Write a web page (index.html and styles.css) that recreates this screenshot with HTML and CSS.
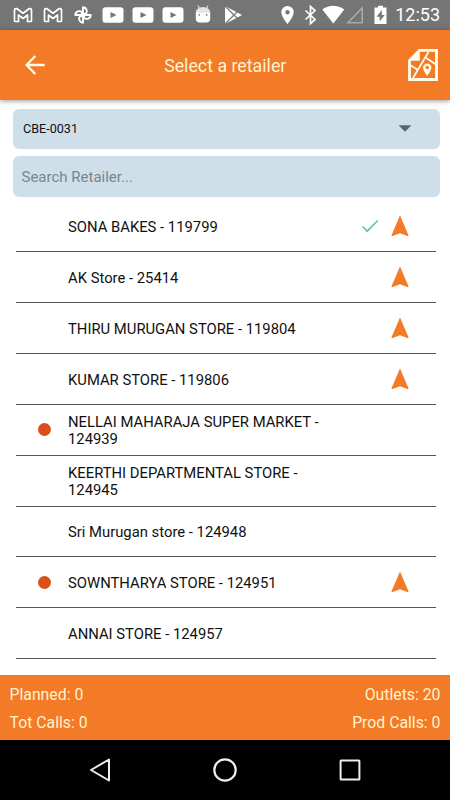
FILE: index.html
```html
<!DOCTYPE html>
<html lang="en">
<head>
  <meta charset="utf-8">
  <title>Select a retailer</title>
  <link rel="stylesheet" href="styles.css">
</head>
<body>
  <!-- shared icons -->
  <svg class="sprite">
    <symbol id="gmail" viewBox="0 0 30 30">
      <path d="M6.500 10v10.500q0 1 1 1h3V15l4.500 3.500L19.500 15v6.500h3q1 0 1-1V10q0-1.300-1.500-1.300h-1L15 13.200 9 8.700H8Q6.500 8.700 6.500 10z" fill="none" stroke="#fff" stroke-width="1.700" stroke-linejoin="round"/>
    </symbol>
    <symbol id="youtube" viewBox="0 0 30 30">
      <path d="M7.500 7.200h15q3 0 3 3v9.600q0 3-3 3h-15q-3 0-3-3v-9.600q0-3 3-3zM12.500 12v6l6-3z" fill="#fff" fill-rule="evenodd"/>
    </symbol>
    <symbol id="navigate" viewBox="0 0 18 22">
      <path d="M9 0.500L17.600 20.500 17 21.300 9 18.200 1 21.300 0.400 20.500z" fill="#f37a26"/>
    </symbol>
  </svg>

  <div class="status-bar">
    <svg class="notice"><use href="#gmail"/></svg>
    <svg class="notice"><use href="#gmail"/></svg>
    <svg class="notice" viewBox="0 0 30 30">
      <g fill="none" stroke="#fff" stroke-width="1.900" stroke-linejoin="round">
        <path d="M15 15V7.300a4 4 0 0 1 2.800 6.700H15"/>
        <path d="M15 15V7.300a4 4 0 0 1 2.800 6.700H15" transform="rotate(90 15 15)"/>
        <path d="M15 15V7.300a4 4 0 0 1 2.800 6.700H15" transform="rotate(180 15 15)"/>
        <path d="M15 15V7.300a4 4 0 0 1 2.800 6.700H15" transform="rotate(270 15 15)"/>
      </g>
    </svg>
    <svg class="notice"><use href="#youtube"/></svg>
    <svg class="notice"><use href="#youtube"/></svg>
    <svg class="notice"><use href="#youtube"/></svg>
    <svg class="notice" viewBox="0 0 30 30">
      <path d="M10 5.500l2 3.500M20 5.500L18 9" stroke="#fff" stroke-width="1"/>
      <path d="M7.800 12.500a7.200 5.500 0 0 1 14.400 0z" fill="#e4e4e4"/>
      <path d="M7.800 12.300h14.400v6.200q0 4-4 4h-6.400q-4 0-4-4z" fill="#fff"/>
      <circle cx="11.300" cy="14.800" r=".9" fill="#777"/>
      <circle cx="18.700" cy="14.800" r=".9" fill="#777"/>
    </svg>
    <svg class="notice" viewBox="0 0 30 30">
      <path d="M7 6l17 9L7 24z" fill="#fff"/>
      <path d="M7 6l12.500 12.500M7 24l12.500-12.500" stroke="#757575" stroke-width="1.200"/>
    </svg>

    <div class="system">
      <svg class="sys" viewBox="0 0 23 30">
        <path d="M11.500 6a6.200 6.200 0 0 0-6.200 6.200C5.300 16.800 11.500 24 11.500 24s6.200-7.200 6.200-11.800A6.200 6.200 0 0 0 11.500 6zm0 4a2.200 2.200 0 1 1 0 4.400 2.200 2.200 0 0 1 0-4.400z" fill="#fff"/>
      </svg>
      <svg class="sys" viewBox="0 0 23 30">
        <path d="M6.500 10.500l9.500 9-4.500 4V6.500l4.500 4-9.500 9" fill="none" stroke="#fff" stroke-width="1.700"/>
      </svg>
      <svg class="sys" viewBox="0 0 23 30">
        <path d="M.3 9.500Q11 2 22.300 9.500L11.300 23.500z" fill="#fff"/>
      </svg>
      <svg class="sys" viewBox="0 0 23 30">
        <path d="M17.200 8v14.800H3z" fill="none" stroke="#a9a9a9" stroke-width="1.600"/>
      </svg>
      <svg class="sys battery" viewBox="0 0 25 30">
        <path d="M6.500 7.500h3.500V5.800h5v1.700h3.500V24h-12zM13.800 10l-5.300 6.700h3.200V21.500l5-6.500h-2.900z" fill="#fff" fill-rule="evenodd"/>
      </svg>
      <span class="clock">12:53</span>
    </div>
  </div>

  <header class="toolbar">
    <svg class="back" viewBox="0 0 20 20">
      <path d="M19.700 10H1.800M10.300 1L1.500 10l8.800 9" fill="none" stroke="#fffbe6" stroke-width="2.300"/>
    </svg>
    <h1 class="title">Select a retailer</h1>
    <svg class="map" viewBox="0 0 30 32">
      <path d="M11.500 1.400H28.500V30.500H1.500V11.500z" fill="none" stroke="#fffdea" stroke-width="2.800"/>
      <path d="M11.800 1.500V11.800H1.500z" fill="#fffdea"/>
      <path d="M20.500 3L5 29M17.500 8.500l10.500 7M2 16l8 5" fill="none" stroke="#fffdea" stroke-width="1.700"/>
      <path d="M19.200 14.200a4.400 4.400 0 0 0-4.400 4.400c0 3.300 4.400 8.700 4.400 8.700s4.400-5.400 4.400-8.700a4.400 4.400 0 0 0-4.400-4.400z" fill="#fffdea" stroke="#f37a26" stroke-width=".6"/>
      <circle cx="19.200" cy="18.500" r="1.700" fill="#f37a26"/>
    </svg>
  </header>

  <main class="content">
    <div class="field select">
      <span>CBE-0031</span>
      <svg class="caret" viewBox="0 0 14 7"><path d="M.5.300h13L7 6.700z" fill="#536970"/></svg>
    </div>
    <div class="field search">Search Retailer...</div>

    <ul class="list">
      <li class="row">
        <span class="mark"></span>
        <span class="name">SONA BAKES - 119799</span>
        <svg class="check" viewBox="0 0 18 14"><path d="M1.500 7.500l4.700 4.700L16.800 1.500" fill="none" stroke="#66c9a3" stroke-width="1.700"/></svg>
        <svg class="go"><use href="#navigate"/></svg>
      </li>
      <li class="row">
        <span class="mark"></span>
        <span class="name">AK Store - 25414</span>
        <svg class="go"><use href="#navigate"/></svg>
      </li>
      <li class="row">
        <span class="mark"></span>
        <span class="name">THIRU MURUGAN STORE - 119804</span>
        <svg class="go"><use href="#navigate"/></svg>
      </li>
      <li class="row">
        <span class="mark"></span>
        <span class="name">KUMAR STORE - 119806</span>
        <svg class="go"><use href="#navigate"/></svg>
      </li>
      <li class="row">
        <span class="mark dot"></span>
        <span class="name">NELLAI MAHARAJA SUPER MARKET -<br>124939</span>
      </li>
      <li class="row">
        <span class="mark"></span>
        <span class="name">KEERTHI DEPARTMENTAL STORE -<br>124945</span>
      </li>
      <li class="row">
        <span class="mark"></span>
        <span class="name">Sri Murugan store - 124948</span>
      </li>
      <li class="row">
        <span class="mark dot"></span>
        <span class="name">SOWNTHARYA STORE - 124951</span>
        <svg class="go"><use href="#navigate"/></svg>
      </li>
      <li class="row">
        <span class="mark"></span>
        <span class="name">ANNAI STORE - 124957</span>
      </li>
    </ul>
  </main>

  <footer class="summary">
    <div class="summary-line"><span>Planned: 0</span><span>Outlets: 20</span></div>
    <div class="summary-line"><span>Tot Calls: 0</span><span>Prod Calls: 0</span></div>
  </footer>

  <nav class="nav-bar">
    <svg class="nav-icon" viewBox="0 0 26 26"><path d="M22 2.500v21L4 13z" fill="none" stroke="#eee" stroke-width="2" stroke-linejoin="round"/></svg>
    <svg class="nav-icon" viewBox="0 0 26 26"><circle cx="13" cy="13" r="10.700" fill="none" stroke="#eee" stroke-width="2.200"/></svg>
    <svg class="nav-icon" viewBox="0 0 26 26"><rect x="3.600" y="3.600" width="18.800" height="18.800" rx=".5" fill="none" stroke="#eee" stroke-width="2"/></svg>
  </nav>
</body>
</html>
```

FILE: styles.css
```css
* {
  box-sizing: border-box;
}

body {
  margin: 0;
  width: 450px;
  height: 800px;
  overflow: hidden;
  display: flex;
  flex-direction: column;
  background-color: #fff;
  color: #111;
  font-family: Roboto, "Liberation Sans", sans-serif;
}

.sprite {
  display: none;
}

svg {
  flex: none;
}

/* status bar */
.status-bar {
  height: 30px;
  flex: none;
  display: flex;
  padding-left: 7.5px;
  background-color: #757575;
}

.notice {
  width: 30px;
  height: 30px;
}

.system {
  display: flex;
  align-items: center;
  margin-left: auto;
  padding-right: 10px;
}

.sys {
  width: 23px;
  height: 30px;
}

.battery {
  width: 25px;
}

.clock {
  width: 47px;
  text-align: right;
  color: #fff;
  font-size: 18px;
  line-height: 30px;
}

/* toolbar */
.toolbar {
  height: 70px;
  flex: none;
  display: flex;
  align-items: center;
  justify-content: space-between;
  padding: 0 12.5px 0 25px;
  background-color: #f37a26;
  box-shadow: 0 1px 5px rgba(0, 0, 0, 0.4);
}

.back {
  width: 20px;
  height: 20px;
}

.title {
  margin: 0 2px 0 0;
  padding-top: 1px;
  color: #fff3cf;
  font-size: 17.8px;
  font-weight: 400;
}

.map {
  width: 30px;
  height: 32px;
}

/* list */
.content {
  flex: 1;
  padding: 8.5px 10px 0 12.5px;
}

.field {
  height: 40.5px;
  display: flex;
  align-items: center;
  border-radius: 6px;
  background-color: #cfdfe9;
}

.select {
  justify-content: space-between;
  padding: 0 28px 0 10.5px;
  font-size: 12.6px;
}

.caret {
  width: 14px;
  height: 7px;
}

.search {
  margin-top: 7px;
  padding: 2px 0 0 9px;
  color: #77868f;
  font-size: 15px;
}

.list {
  list-style: none;
  margin: 4.7px 4px 0 3.5px;
  padding: 0;
}

.row {
  height: 50.9px;
  display: flex;
  align-items: center;
  padding-right: 27px;
  border-bottom: 1px solid #555;
}

.mark {
  width: 13px;
  height: 13px;
  margin: 0 17px 0 22px;
}

.dot {
  border-radius: 50%;
  background-color: #da4f1a;
}

.name {
  flex: 1;
  padding-top: 3px;
  font-size: 14.82px;
  line-height: 17.5px;
}

.check {
  width: 18px;
  height: 14px;
  margin-right: 12px;
}

.go {
  width: 18px;
  height: 22px;
}

/* totals */
.summary {
  height: 65px;
  flex: none;
  padding: 6px 9.5px 0;
  background-color: #f37a26;
  color: #fff3cf;
  font-size: 15.8px;
}

.summary-line {
  display: flex;
  justify-content: space-between;
  line-height: 28px;
}

.nav-bar {
  height: 60px;
  flex: none;
  display: flex;
  align-items: center;
  justify-content: space-between;
  padding: 0 87px;
  background-color: #000;
}

.nav-icon {
  width: 26px;
  height: 26px;
}
```
